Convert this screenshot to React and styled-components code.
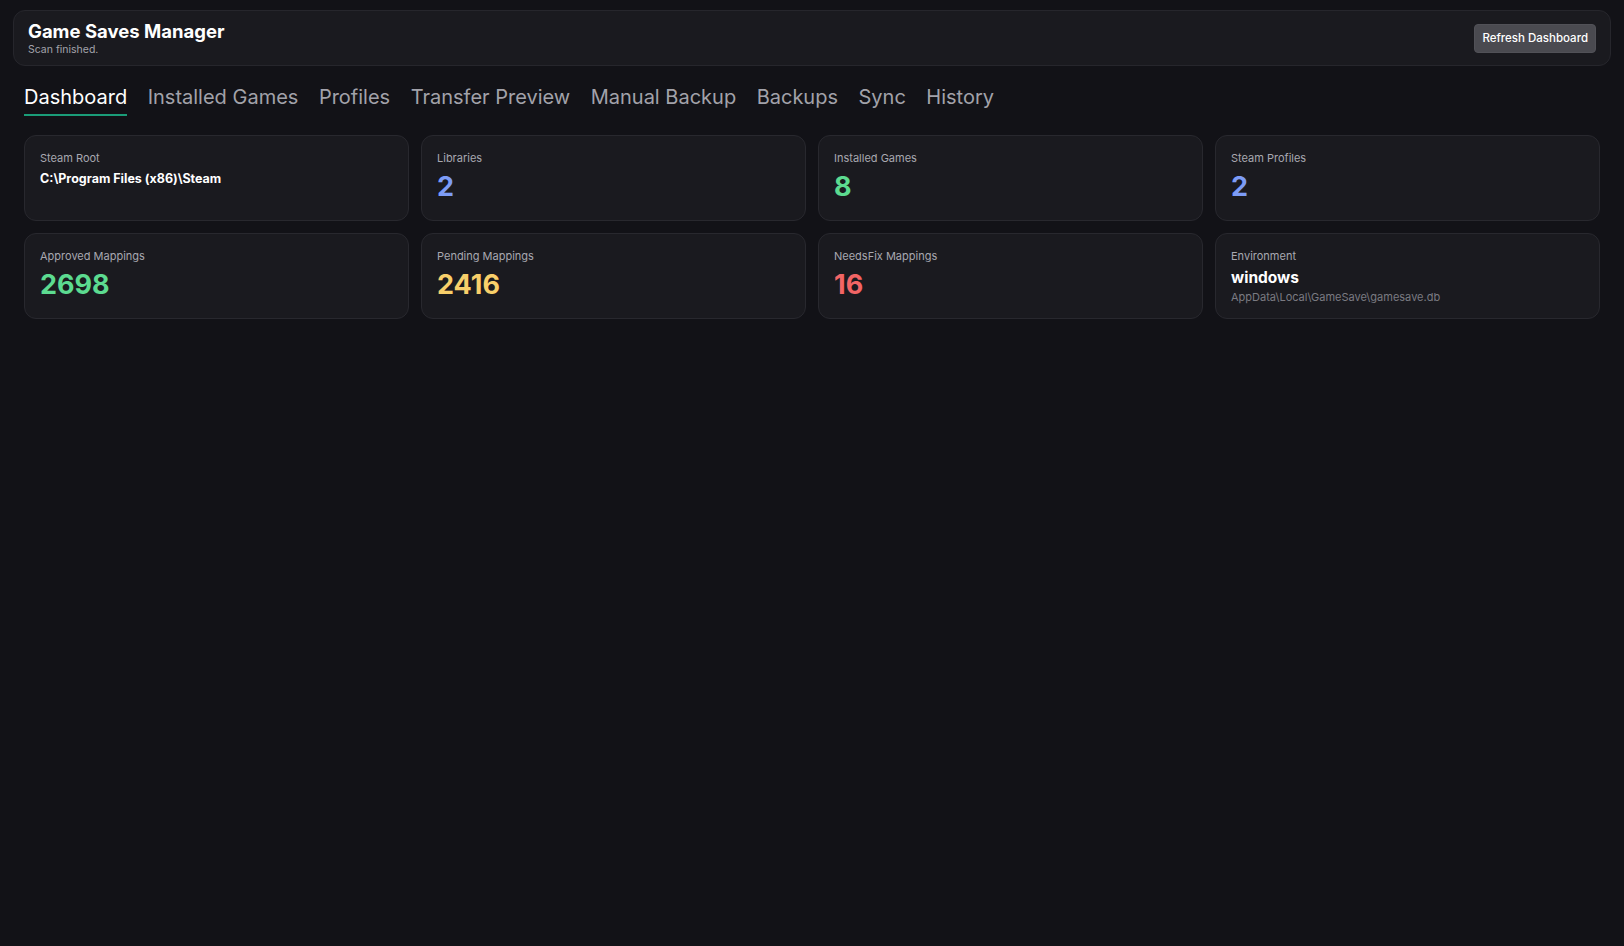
import React from "react";
import styled, { createGlobalStyle } from "styled-components";

const GlobalStyle = createGlobalStyle`
    html, body {
        margin: 0;
        padding: 0;
        background-color: #121217;
    }
    body {
        font-family: Inter, "Noto Sans", sans-serif;
        color: #f2f2f5;
    }
`;

const tabs = ["Dashboard", "Installed Games", "Profiles", "Transfer Preview", "Manual Backup", "Backups", "Sync", "History"];

const stats = [
    { id: 1, label: "Steam Root", path: "C:\\Program Files (x86)\\Steam" },
    { id: 2, label: "Libraries", value: "2", tone: "blue" },
    { id: 3, label: "Installed Games", value: "8", tone: "green" },
    { id: 4, label: "Steam Profiles", value: "2", tone: "blue" },
    { id: 5, label: "Approved Mappings", value: "2698", tone: "green" },
    { id: 6, label: "Pending Mappings", value: "2416", tone: "yellow" },
    { id: 7, label: "NeedsFix Mappings", value: "16", tone: "red" },
    { id: 8, label: "Environment", env: "windows", sub: "AppData\\Local\\GameSave\\gamesave.db" },
];

const tones = {
    blue: "#7d9cf6",
    green: "#5cdb90",
    yellow: "#f8cf6a",
    red: "#f26565",
};

const App = () => {
    return (
        <Page>
            <GlobalStyle />
            <Header>
                <div>
                    <Title>Game Saves Manager</Title>
                    <Status>Scan finished.</Status>
                </div>
                <RefreshButton type="button">Refresh Dashboard</RefreshButton>
            </Header>

            <Tabs>
                {tabs.map((tab, i) => (
                    <Tab key={tab} $active={i === 0}>{tab}</Tab>
                ))}
            </Tabs>

            <Grid>
                {stats.map(stat => (
                    <Card key={stat.id}>
                        <Label>{stat.label}</Label>
                        {stat.path && <Path>{stat.path}</Path>}
                        {stat.value && <Value $tone={stat.tone}>{stat.value}</Value>}
                        {stat.env && (
                            <>
                                <EnvName>{stat.env}</EnvName>
                                <EnvSub>{stat.sub}</EnvSub>
                            </>
                        )}
                    </Card>
                ))}
            </Grid>
        </Page>
    );
}

const Page = styled.div`
    min-height: 946px;
    padding: 10px 13px 0 13px;
    box-sizing: border-box;
`;

const Header = styled.header`
    display: flex;
    align-items: center;
    justify-content: space-between;
    height: 56px;
    box-sizing: border-box;
    padding: 1px 14px 0 14px;
    background-color: #1a1a1f;
    border: 1px solid #26262c;
    border-radius: 12px;
`;

const Title = styled.h1`
    margin: 0;
    font-size: 18.5px;
    font-weight: 700;
    line-height: 22px;
    color: #ffffff;
`;

const Status = styled.div`
    margin-top: 1px;
    font-size: 10.5px;
    line-height: 14px;
    color: #a3a3ab;
`;

const RefreshButton = styled.button`
    height: 29px;
    padding: 0 7px;
    margin-top: -1px;
    border: 1px solid #515157;
    border-radius: 4px;
    background-color: #4a4a50;
    color: #ffffff;
    font-family: Inter, "Noto Sans", sans-serif;
    font-size: 11.5px;
    font-weight: 500;
    cursor: pointer;
`;

const Tabs = styled.nav`
    display: flex;
    gap: 20.5px;
    padding: 0 11px;
    margin-top: 17px;
`;

const Tab = styled.div`
    font-size: 20px;
    font-weight: 400;
    line-height: 28px;
    padding-bottom: 3px;
    color: ${p => (p.$active ? "#ffffff" : "#a2a2aa")};
    border-bottom: 2px solid ${p => (p.$active ? "#1a9c78" : "transparent")};
    cursor: pointer;
`;

const Grid = styled.div`
    display: grid;
    grid-template-columns: repeat(4, 1fr);
    gap: 12px;
    padding: 0 11px;
    margin-top: 19px;
`;

const Card = styled.div`
    height: 86px;
    box-sizing: border-box;
    padding: 14px 15px;
    background-color: #1a1a1f;
    border: 1px solid #28282e;
    border-radius: 12px;
`;

const Label = styled.div`
    font-size: 11px;
    line-height: 16px;
    color: #a8a8b0;
`;

const Path = styled.div`
    margin-top: 4px;
    font-size: 12.5px;
    font-weight: 700;
    line-height: 18px;
    color: #ffffff;
`;

const Value = styled.div`
    margin-top: 4px;
    font-size: 27px;
    font-weight: 700;
    line-height: 34px;
    color: ${p => tones[p.$tone]};
`;

const EnvName = styled.div`
    margin-top: 4px;
    font-size: 15.5px;
    font-weight: 700;
    line-height: 20px;
    color: #ffffff;
`;

const EnvSub = styled.div`
    margin-top: 1px;
    font-size: 11px;
    line-height: 16px;
    color: #7a7a82;
`;

export default App;
